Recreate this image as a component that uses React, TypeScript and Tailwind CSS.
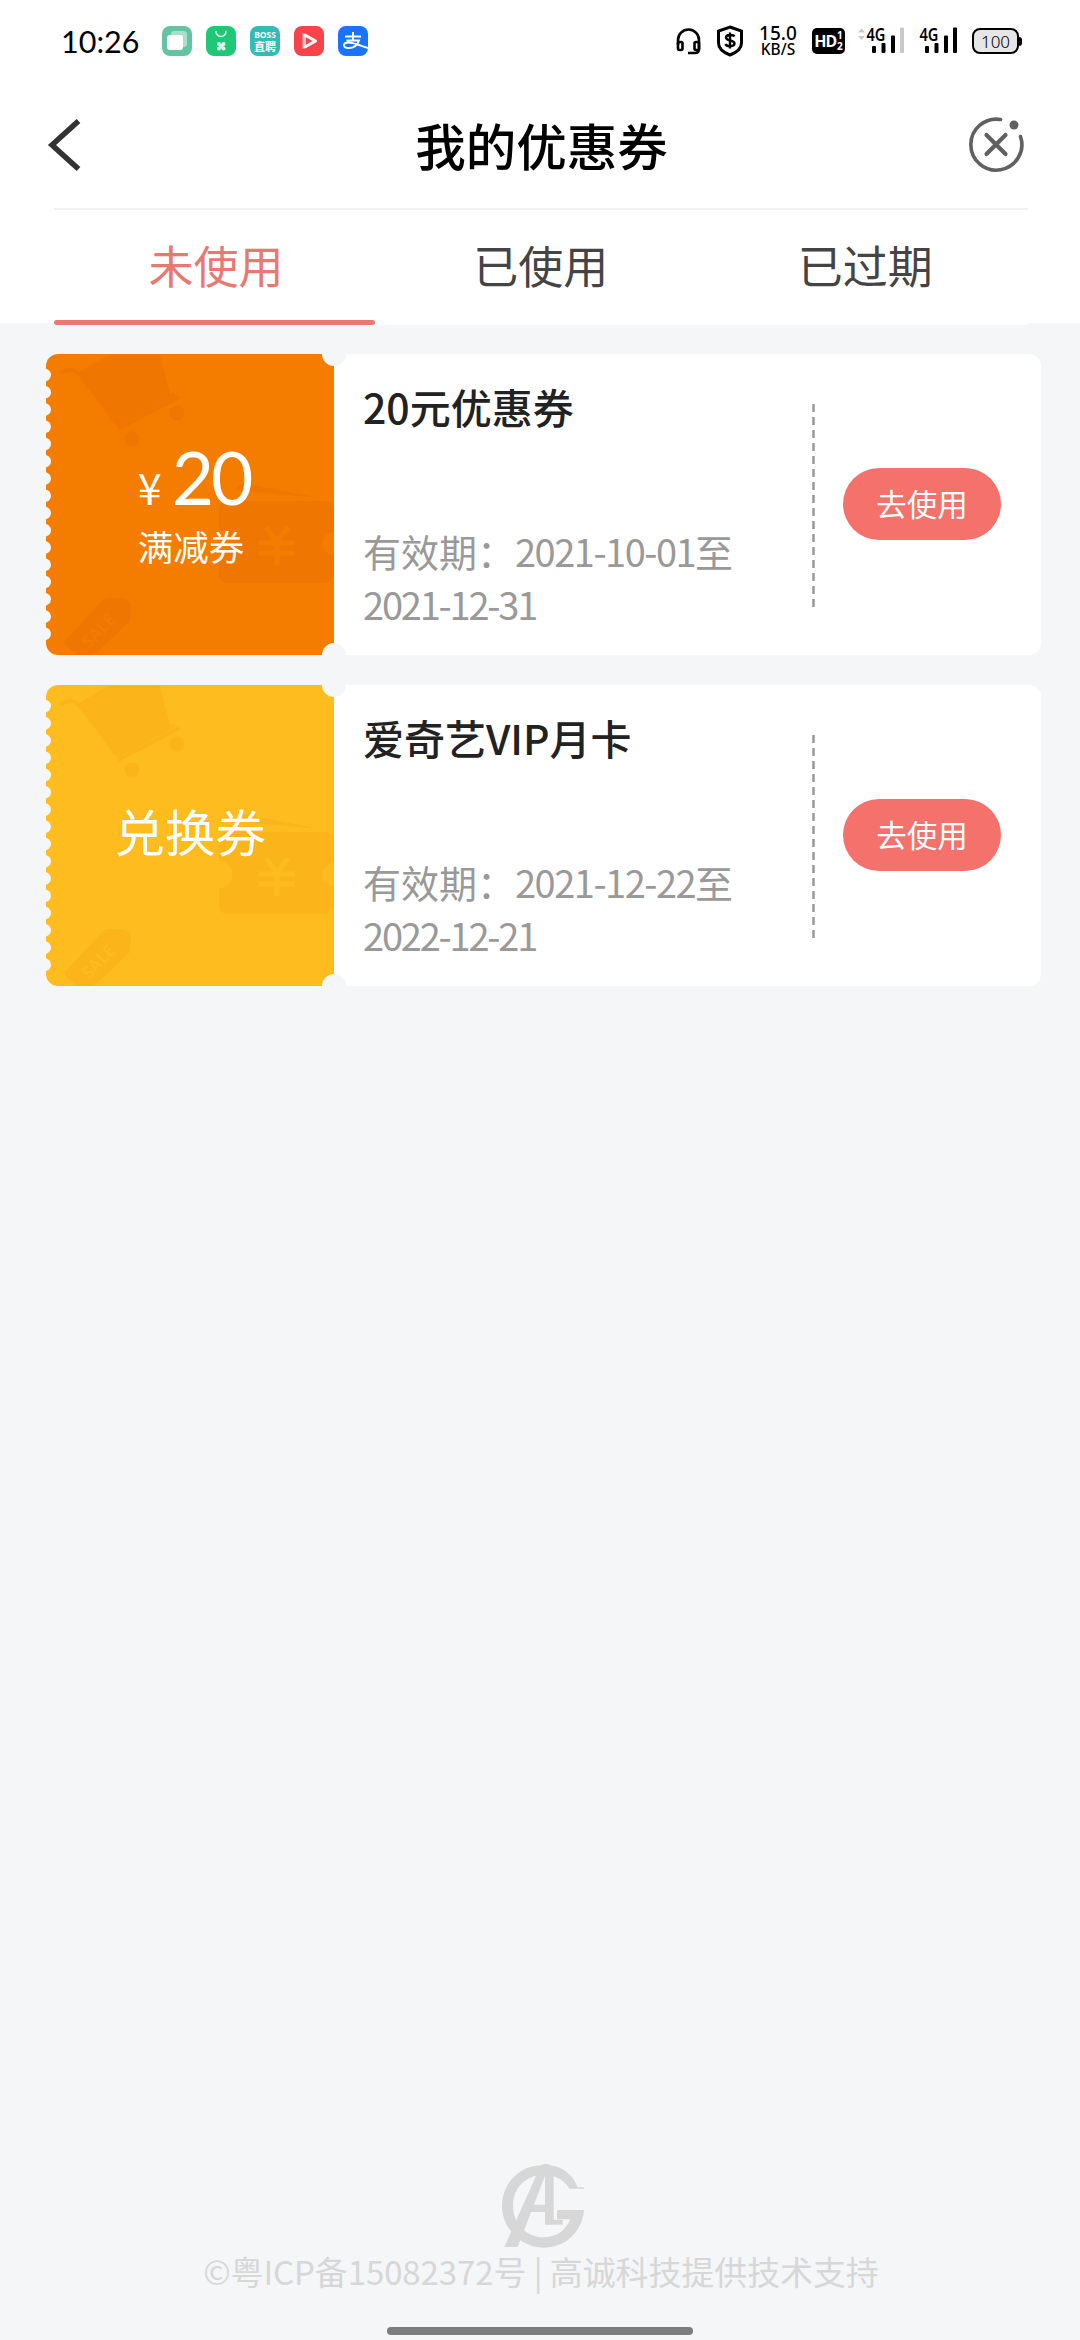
import React from "react";

type Coupon = {
   title: string;
   from: string;
   to: string;
   amount?: string;
   label: string;
   color: string;
   shade: string;
};

const coupons: Coupon[] = [
   {
      title: "20元优惠券",
      from: "2021-10-01",
      to: "2021-12-31",
      amount: "20",
      label: "满减券",
      color: "#f47d00",
      shade: "#ef7600",
   },
   {
      title: "爱奇艺VIP月卡",
      from: "2021-12-22",
      to: "2022-12-21",
      label: "兑换券",
      color: "#ffbc1f",
      shade: "#fbb41a",
   },
];

const tabs = ["未使用", "已使用", "已过期"];

const AppIcons = () => (
   <div className="ml-6 flex gap-3.5">
      <svg width="30" height="30" viewBox="0 0 30 30">
         <rect width="30" height="30" rx="8" fill="#62c4a2" />
         <rect x="9" y="5" width="16" height="16" rx="3" fill="#a9e0cb" />
         <rect x="5" y="9" width="16" height="15" rx="3" fill="#fff" />
      </svg>
      <svg width="30" height="30" viewBox="0 0 30 30">
         <rect width="30" height="30" rx="8" fill="#1fc776" />
         <path d="M10 5.500a5 5 0 0 0 10 0" fill="none" stroke="#d8ffea" strokeWidth="1.600" strokeLinecap="round" />
         <g fill="#d8ffea">
            <circle cx="13" cy="18" r="2" />
            <circle cx="17.500" cy="18" r="2" />
            <circle cx="13" cy="22.500" r="2" />
            <circle cx="17.500" cy="22.500" r="2" />
            <rect x="13" y="18" width="4.500" height="4.500" />
         </g>
      </svg>
      <div className="flex h-[30px] w-[30px] flex-col items-center justify-center rounded-lg bg-[#37bab4] text-white">
         <span className="font-['Noto_Sans',sans-serif] text-[8.500px] leading-[10px] font-bold">BOSS</span>
         <span className="text-[11px] leading-[12px] font-bold">直聘</span>
      </div>
      <svg width="30" height="30" viewBox="0 0 30 30">
         <rect width="30" height="30" rx="8" fill="#f8434b" />
         <path d="M8.500 7l3.500 2v12l-3.500 2z" fill="#ffc4c6" />
         <path d="M10 8.500L21.500 15 10 21.500" fill="none" stroke="#fff" strokeWidth="3" strokeLinejoin="round" />
      </svg>
      <svg width="30" height="30" viewBox="0 0 30 30">
         <rect width="30" height="30" rx="8" fill="#1a74fb" />
         <path
            d="M7 10.500h16M15 6v8.500M8.500 14.500h12.500c-1.500 5-6 7.500-10.500 7.500-6 0-6-5.500 0-5.500 6 0 10 3 19.500 5.500"
            fill="none"
            stroke="#fff"
            strokeWidth="1.900"
         />
      </svg>
   </div>
);

const Signal = ({ weak }: { weak?: boolean }) => (
   <svg className="overflow-visible" width="46" height="30" viewBox="0 0 46 30">
      {weak && <path d="M0 6.500l3.500-4 3.500 4zM0 10l3.500 4L7 10z" fill="#c9c9c9" />}
      <text x="8.500" y="15" fontSize="17" fontWeight="600" textLength="19" lengthAdjust="spacingAndGlyphs">
         4G
      </text>
      <g fill="#000">
         <rect x="14" y="20" width="4" height="7" rx="1" />
         <rect x="23.500" y="17" width="4" height="10" rx="1" />
         <rect x="33" y="9.500" width="4" height="17.500" rx="1" />
      </g>
      <rect x="42" y="1.500" width="4" height="25.500" rx="1" fill={weak ? "#c9c9c9" : "#000"} />
   </svg>
);

const StatusBar = () => (
   <div className="flex h-[82px] items-center pr-[58px] pl-[61px]">
      <span className="w-[77px] font-['Lato','Noto_Sans',sans-serif] text-[30.500px] leading-none text-black">10:26</span>
      <AppIcons />
      <div className="ml-auto flex items-center font-['Noto_Sans',sans-serif] text-black">
         <svg width="25" height="30" viewBox="0 0 25 30" fill="none" stroke="#000" strokeWidth="2.600">
            <path d="M2 19v-5a10.500 10.500 0 0 1 21 0v9q0 4-4 4h-7" />
            <rect x="2" y="16" width="4.500" height="8" rx="1.500" />
            <rect x="18.500" y="16" width="4.500" height="8" rx="1.500" />
         </svg>
         <svg className="ml-[15px]" width="28" height="32" viewBox="0 0 28 32" fill="none" stroke="#000">
            <path d="M14 2l11.500 4v12c0 6-5 9.500-11.500 12C7.500 27.500 2.500 24 2.500 18V6z" strokeWidth="3" />
            <path d="M18.500 11.500c-1-2-8.500-2.500-8.500 1 0 4 8.500 2 8.500 6 0 3.500-8 3.500-9 .5M14 7.500v16" strokeWidth="2.400" />
         </svg>
         <div className="ml-[15px] flex w-[38px] flex-col items-center font-medium">
            <span className="text-[19px] leading-[16px]">15.0</span>
            <span className="text-[15.500px] leading-[16px]">KB/S</span>
         </div>
         <div className="ml-[15px] flex h-[26px] w-[33px] items-center justify-center rounded-[5px] bg-black font-bold text-white">
            <span className="text-[16px] tracking-[-1px]">HD</span>
            <span className="ml-px flex flex-col text-[10px] leading-[11px]">
               <span>1</span>
               <span>2</span>
            </span>
         </div>
         <div className="ml-[13px] flex gap-[7px]">
            <Signal weak />
            <Signal />
         </div>
         <div className="ml-[15px] flex h-[26px] w-[47px] items-center justify-center rounded-[8px] border-[2.500px] border-black bg-[#e6e6e6] text-[17px] leading-none font-light">
            100
         </div>
         <span className="h-[9px] w-[3px] rounded-r-sm bg-black" />
      </div>
   </div>
);

const Header = () => (
   <div className="flex h-[126px] items-center justify-between pr-[56px] pl-[47px]">
      <svg width="34" height="52" viewBox="0 0 34 52" fill="none" stroke="#333" strokeWidth="5.500">
         <path d="M31.500 2L5 26l26.500 24" />
      </svg>
      <h1 className="-mt-0.5 pl-[34px] text-[50.500px] leading-none font-medium text-black">我的优惠券</h1>
      <svg width="56" height="56" viewBox="0 0 56 56" fill="none" stroke="#606060" strokeWidth="3.600" strokeLinecap="round">
         <path d="M32.500 2.500A25.500 25.500 0 1 0 52.500 19.500" />
         <path d="M18.500 18l19 19M37.500 18l-19 19" strokeWidth="4.200" />
         <circle cx="46" cy="8" r="4.500" fill="#606060" stroke="none" />
      </svg>
   </div>
);

const Art = ({ coupon }: { coupon: Coupon }) => (
   <svg className="absolute inset-0" width="288" height="301" viewBox="0 0 288 301">
      <g fill={coupon.shade}>
         <path d="M32 19l30-18h52l10 39-56 30z" />
         <path d="M14 19q12-7 20 2l38 49 57-30" fill="none" stroke={coupon.shade} strokeWidth="4" />
         <path d="M72 75l61-32" fill="none" stroke={coupon.shade} strokeWidth="4" />
         <circle cx="86" cy="85" r="7.500" />
         <circle cx="131" cy="59" r="7.500" />
         <path d="M190 136q2-7 12-6l72 14z" />
         <path d="M182 147h96q8 0 10 7v24a11 11 0 0 0 0 23v20q-4 8-10 8h-96q-9 0-9-9v-17a11 11 0 0 0 0-27v-20q0-9 9-9z" />
         <path d="M19 287l36-39q4-4 9-4l14 1q7 1 7 8l-1 14-33 31q-3 3-6 3H32q-15-10-13-14z" />
      </g>
      <path d="M220 173l11 15 11-15M213 189h36M213 199h36M231 188v23" fill="none" stroke={coupon.color} strokeWidth="5" />
      <text
         x="43"
         y="295"
         transform="rotate(-46 43 295)"
         fontSize="17"
         fontWeight="600"
         fill={coupon.color}
         className="font-['Noto_Sans',sans-serif]"
      >
         SALE
      </text>
      {/* perforated edge */}
      <g fill="#f4f6f8">
         {Array.from({ length: 16 }, (_, i) => (
            <circle key={i} cx="-1.500" cy={21 + i * 17.250} r="6.500" />
         ))}
      </g>
   </svg>
);

const CouponCard = ({ coupon }: { coupon: Coupon }) => (
   <div className="relative flex h-[301px] overflow-hidden rounded-xl bg-white">
      <div
         className="relative flex w-[288px] shrink-0 flex-col items-center justify-center text-white"
         style={{ backgroundColor: coupon.color }}
      >
         <Art coupon={coupon} />
         {coupon.amount ? (
            <div className="relative mt-3 ml-2">
               <div className="flex items-baseline gap-[9px] leading-none">
                  <span className="w-[25px] text-[43px] leading-[64px]">¥</span>
                  <span className="font-['Lato','Noto_Sans',sans-serif] text-[73px] leading-[64px] tracking-[-3px]">
                     {coupon.amount}
                  </span>
               </div>
               <div className="-mt-0.5 text-[35.500px] leading-[60px]">{coupon.label}</div>
            </div>
         ) : (
            <div className="relative -mt-2.5 text-[50.500px] leading-none">{coupon.label}</div>
         )}
      </div>
      <div className="flex w-[478px] shrink-0 flex-col justify-between pt-[24px] pb-[25px] pl-[29px]">
         <h2 className="text-[41px] leading-[56px] font-medium text-[#222]">{coupon.title}</h2>
         <p className="w-[400px] text-[38px] leading-[53px] text-[#999]">
            有效期：<span className="tracking-[-1.500px]">{coupon.from}</span>至
            <br />
            <span className="tracking-[-2.200px]">{coupon.to}</span>
         </p>
      </div>
      <svg className="mt-[50px]" width="3" height="203" viewBox="0 0 3 203">
         <path d="M1.500 0v203" stroke="#999" strokeWidth="2.500" strokeDasharray="8 5" />
      </svg>
      <button className="mt-[114px] ml-[28px] h-[72px] w-[158px] rounded-full bg-[#f5716b] pb-[2px] text-[30.500px] leading-none text-white">
         去使用
      </button>
      <span className="absolute -top-3 left-[276px] h-6 w-6 rounded-full bg-[#f4f6f8]" />
      <span className="absolute -bottom-3 left-[276px] h-6 w-6 rounded-full bg-[#f4f6f8]" />
   </div>
);

const Logo = () => (
   <svg className="ml-[7px]" width="83" height="85" viewBox="35 40 249 255" fill="#d7d7d7">
      <path d="M281 117H237C220 88 192 76 160 76c-54 0-92 40-92 92 0 56 42 95 92 95 38 0 66-20 80-54h-40v-28h81c-6 70-60 113-121 113C92 294 35 236 35 168 35 100 90 48 152 47q14-9 28 0c40 5 68 30 82 66h19z" />
      <path d="M150 50h40v160h27v15h-53V78L82 292H42z" />
      <path d="M125 165h45v22h-52z" />
   </svg>
);

export default function App() {
   return (
      <div className="flex h-[2340px] w-[1080px] flex-col overflow-hidden bg-[#f4f6f8] font-['Noto_Sans_CJK_SC',sans-serif]">
         <div className="h-[323px] shrink-0 bg-white">
            <StatusBar />
            <Header />
            <div className="mr-[52px] ml-[54px] flex h-[117px] border-t-2 border-[#f1f1f2] bg-white">
               {tabs.map((tab, i) => (
                  <div
                     key={tab}
                     className={`flex flex-1 flex-col items-center justify-between pt-[25px] text-[45px] leading-[60px] ${
                        i === 0 ? "text-[#e97873]" : "text-[#444]"
                     }`}
                  >
                     <span className="-ml-px">{tab}</span>
                     {i === 0 && <span className="mr-[4px] h-[5px] w-[321px] rounded-sm bg-[#e97873]" />}
                  </div>
               ))}
            </div>
         </div>
         <div className="mt-[31px] mr-[39px] ml-[46px] flex flex-col gap-[30px]">
            {coupons.map((coupon) => (
               <CouponCard key={coupon.title} coupon={coupon} />
            ))}
         </div>
         <div className="mt-auto flex flex-col items-center pb-[5px]">
            <Logo />
            <p className="mt-px ml-0.5 text-[33px] leading-[44px] tracking-[-0.100px] whitespace-nowrap text-[#d7d7d7]">
               ©粤ICP备15082372号 | 高诚科技提供技术支持
            </p>
            <span className="mt-[34px] h-[8px] w-[306px] rounded-full bg-[#7b7c7e]" />
         </div>
      </div>
   );
}
